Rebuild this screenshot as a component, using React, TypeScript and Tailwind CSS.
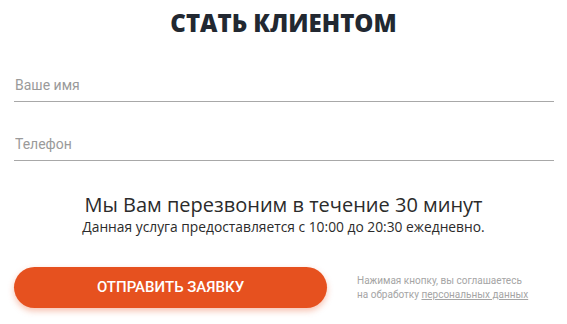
export default function App() {
  return (
    <div className="w-[567px] h-[324px] bg-white overflow-hidden font-['Open_Sans',sans-serif]">
      {/* заголовок */}
      <h2 className="pt-[7px] text-center text-[24px] leading-[32px] font-extrabold text-[#222831]">
        СТАТЬ КЛИЕНТОМ
      </h2>

      {/* поля */}
      <div className="pl-[14px] pr-[13px] mt-[29px] flex flex-col gap-[25px] font-['Roboto',sans-serif]">
        <input
          placeholder="Ваше имя"
          className="w-full h-[34px] pl-px text-[14px] text-[#333] placeholder:text-[#9a9a9a] border-b border-[#a8a8a8] outline-none bg-transparent"
        />
        <input
          placeholder="Телефон"
          className="w-full h-[34px] pl-px text-[14px] text-[#333] placeholder:text-[#9a9a9a] border-b border-[#a8a8a8] outline-none bg-transparent"
        />
      </div>

      {/* инфо */}
      <div className="mt-[31px] text-center text-[#2b2b2b]">
        <div className="text-[20px] leading-[26px]">Мы Вам перезвоним в течение 30 минут</div>
        <div className="text-[13.8px] leading-[18px]">
          Данная услуга предоставляется с 10:00 до 20:30 ежедневно.
        </div>
      </div>

      {/* кнопка */}
      <div className="mt-[31px] pl-[14px] flex items-center gap-[30px]">
        <button className="w-[313px] h-[41px] shrink-0 rounded-full bg-[#e6511f] text-white text-[15px] font-medium font-['Roboto',sans-serif] shadow-[0_3px_6px_rgba(230,81,31,0.35)]">
          ОТПРАВИТЬ ЗАЯВКУ
        </button>
        <p className="text-[10px] leading-[14px] text-[#a5a5a5] font-['Roboto',sans-serif]">
          Нажимая кнопку, вы соглашаетесь
          <br />
          на обработку <a className="underline">персональных данных</a>
        </p>
      </div>
    </div>
  )
}
